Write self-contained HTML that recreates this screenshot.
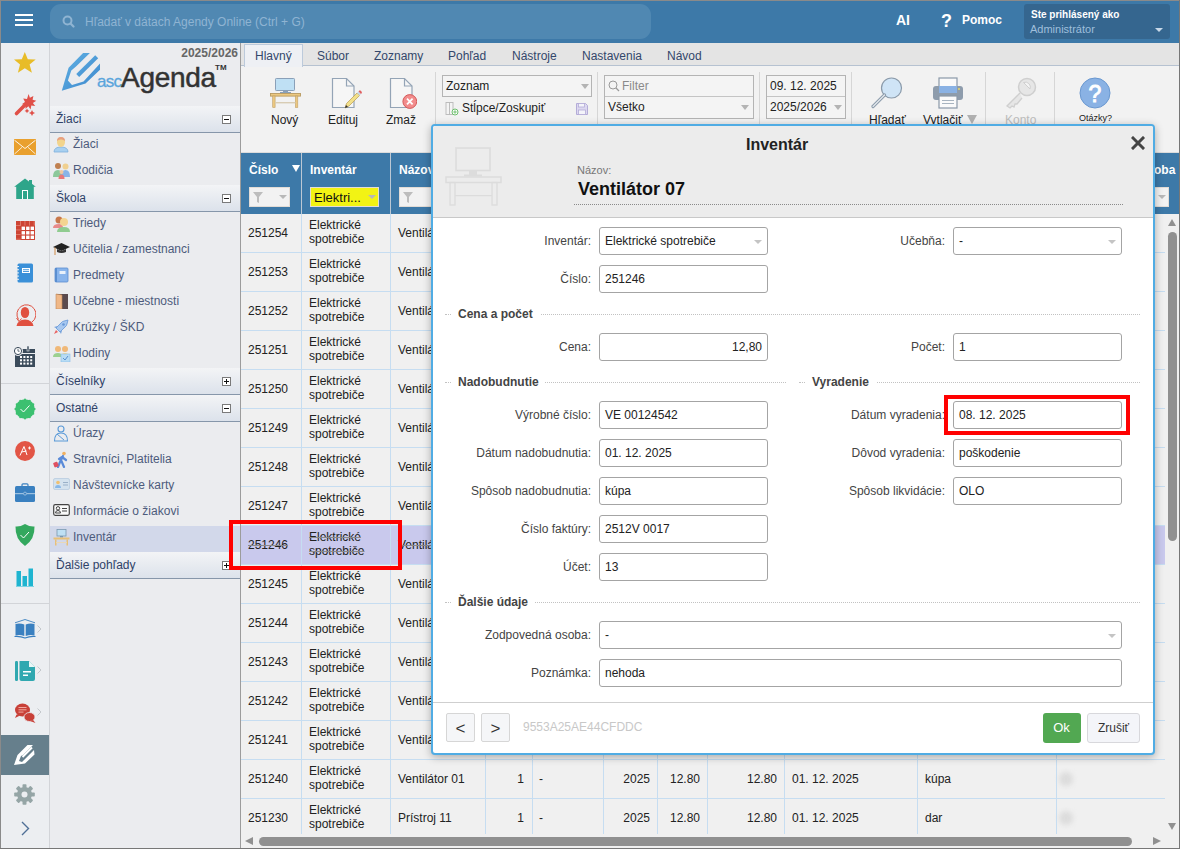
<!DOCTYPE html>
<html><head><meta charset="utf-8">
<style>
*{box-sizing:border-box;margin:0;padding:0}
html,body{width:1180px;height:849px;overflow:hidden;background:#ececec;font-family:"Liberation Sans",sans-serif;font-size:12px;color:#222}
.a{position:absolute}
.t12{position:absolute;font-size:12px;line-height:12px;white-space:nowrap}
#hdr{left:1px;top:1px;width:1178px;height:42px;background:#3d79a8}
#iconbar{left:1px;top:43px;width:48px;height:805px;background:#eceef1}
#nav{left:50px;top:43px;width:190px;height:805px;background:#ebecef}
.sec{position:absolute;left:50px;width:190px;height:27px;background:linear-gradient(#f3f4f6,#dce2eb);border-bottom:1px solid #8696aa}
.sec .tx{position:absolute;left:6px;top:7px;font-size:12px;line-height:12px;color:#2f4268}
.sec .box{position:absolute;left:172px;top:9px;width:9px;height:9px;border:1px solid #7a7a7a;background:#fff}
.sec .box:before{content:"";position:absolute;left:1px;top:3px;width:5px;height:1px;background:#111}
.sec .box.plus:after{content:"";position:absolute;left:3px;top:1px;width:1px;height:5px;background:#111}
.item{position:absolute;left:50px;width:190px;height:26px}
.item .tx{position:absolute;left:23px;top:5px;font-size:12px;line-height:12px;color:#4d5b7c;white-space:nowrap}
.item svg{position:absolute;left:3px;top:3px}
#main{left:241px;top:43px;width:938px;height:805px;background:#f2f2f2}
.tab{position:absolute;top:50px;color:#33476b;font-size:12px;line-height:12px}
.tb{position:absolute;font-size:12px;line-height:12px;color:#222;white-space:nowrap}
.sep{position:absolute;top:72px;width:1px;height:78px;background:#d6d6d6}
.arr{position:absolute;width:0;height:0;border-left:4px solid transparent;border-right:4px solid transparent;border-top:5px solid #b4b4b4}
.gh{position:absolute;top:162px;color:#fff;font-weight:bold;font-size:12px;line-height:12px;white-space:nowrap}
.fbox{position:absolute;top:187px;height:20px;background:#f2f2f2;border:1px solid #c8d2dc}
.row{position:absolute;left:241px;width:924px;height:39px;border-bottom:1px solid #c6ddf1;background:#f0f0f0}
.c{position:absolute;top:14px;font-size:12px;line-height:12px;color:#222;white-space:nowrap}
.c2{position:absolute;top:6px;line-height:13.5px;font-size:12px;color:#222;white-space:nowrap}
.r{text-align:right}
.vl{position:absolute;top:214px;width:1px;height:620px;background:#c6ddf1}
.vh{position:absolute;top:153px;width:1px;height:61px;background:#2d6697}
</style></head><body>
<!-- frame borders -->
<div class="a" style="left:0;top:0;width:1180px;height:1px;background:#8a8a8a"></div>
<div class="a" style="left:0;top:0;width:1px;height:849px;background:#8a8a8a"></div>
<div class="a" style="left:1179px;top:0;width:1px;height:849px;background:#777"></div>
<div class="a" style="left:0;top:848px;width:1180px;height:1px;background:#777"></div>

<!-- HEADER -->
<div id="hdr" class="a">
  <div class="a" style="left:14px;top:13px;width:18px;height:2px;background:#fff;box-shadow:0 5px 0 #fff,0 10px 0 #fff"></div>
  <div class="a" style="left:49px;top:3px;width:601px;height:35px;border-radius:11px;background:#5088b2">
    <svg class="a" style="left:12px;top:11px" width="13" height="13" viewBox="0 0 13 13"><circle cx="5.5" cy="5.5" r="4" fill="none" stroke="#8fb4d2" stroke-width="2"/><line x1="8.5" y1="8.5" x2="11.5" y2="11.5" stroke="#8fb4d2" stroke-width="2.2" stroke-linecap="round"/></svg>
    <div class="t12" style="left:35px;top:12px;color:#8fb4d2">Hľadať v dátach Agendy Online (Ctrl + G)</div>
  </div>
  <div class="a" style="left:895px;top:12px;color:#fff;font-weight:bold;font-size:14px;line-height:14px">AI</div>
  <div class="a" style="left:940px;top:11px;color:#fff;font-weight:bold;font-size:18px;line-height:18px">?</div>
  <div class="a" style="left:961px;top:13px;color:#fff;font-weight:bold;font-size:12px;line-height:12px">Pomoc</div>
  <div class="a" style="left:1023px;top:3px;width:146px;height:35px;background:#35668f;border-radius:3px">
    <div class="a" style="left:7px;top:6px;color:#fff;font-weight:bold;font-size:10px;line-height:10px">Ste prihlásený ako</div>
    <div class="a" style="left:6px;top:20px;color:#9fbfdc;font-size:11px;line-height:11px">Administrátor</div>
    <div class="arr" style="left:131px;top:24px;border-top-color:#c8d8e8;border-left-width:4px;border-right-width:4px;border-top-width:4px"></div>
  </div>
</div>

<!-- ICON BAR -->
<div id="iconbar" class="a"></div>
<div class="a" style="left:49px;top:43px;width:1px;height:805px;background:#d2d4d8"></div>

<!-- NAV -->
<div id="nav" class="a"></div>
<div class="a" style="left:240px;top:43px;width:1px;height:805px;background:#9c9c9c"></div>

<!-- MAIN -->
<div id="main" class="a"></div>
<!-- tabs -->
<div class="a" style="left:241px;top:43px;width:938px;height:23px;background:#e4e4e4"></div>
<div class="a" style="left:241px;top:65px;width:938px;height:1px;background:#b6c2d1"></div>
<div class="a" style="left:244px;top:44px;width:59px;height:23px;background:#eef0f4;border:1px solid #bccadb;border-bottom:none"></div>
<div class="tab" style="left:255px">Hlavný</div>
<div class="tab" style="left:317px">Súbor</div>
<div class="tab" style="left:374px">Zoznamy</div>
<div class="tab" style="left:448px">Pohľad</div>
<div class="tab" style="left:512px">Nástroje</div>
<div class="tab" style="left:582px">Nastavenia</div>
<div class="tab" style="left:667px">Návod</div>

<div class="a" style="left:130px;top:47px;width:108px;text-align:right;color:#666;font-weight:bold;font-size:12px;line-height:12px">2025/2026</div>
<svg class="a" style="left:55px;top:48px" width="50" height="48" viewBox="0 0 50 48">
<defs><linearGradient id="lg" x1="0" y1="0" x2="1" y2="1"><stop offset="0" stop-color="#62b2e4"/><stop offset="1" stop-color="#3b86cc"/></linearGradient></defs>
<path d="M6.8 42.7 L13.6 19.7 L28.1 5.1 L34.9 5.1 L21 18.6 L16.3 22.4 L12.9 32.5 L17 37 L28.5 33.6 L45 15.6 L45 21.7 L30.5 35.6 Z" fill="url(#lg)"/>
<path d="M41.7 8.8 L22.7 27.5" stroke="url(#lg)" stroke-width="4.2" stroke-linecap="butt"/>
</svg>
<div class="a" style="left:97px;top:73px;color:#5aa5dc;font-size:17px;line-height:17px;letter-spacing:-0.7px;-webkit-text-stroke:0.3px #5aa5dc">asc</div>
<div class="a" style="left:121px;top:64px;color:#333;font-size:28px;line-height:28px;letter-spacing:-0.3px;-webkit-text-stroke:0.5px #333">Agenda</div>
<div class="a" style="left:215px;top:64px;color:#333;font-size:8px;line-height:8px;font-weight:bold">TM</div>
<div class="sec" style="top:106px"><div class="tx">Žiaci</div><div class="box"></div></div>
<div class="item" style="top:133px;"><svg width="16" height="17" viewBox="0 0 16 17"><path d="M1 16 Q1 11 8 11 Q15 11 15 16 Z" fill="#a8d0f0" stroke="#7fb0dc" stroke-width="0.8"/><ellipse cx="8" cy="6" rx="4" ry="5" fill="#f2d48c"/><path d="M4 5 Q4 1 8 1 Q12 1 12 5 Q10 3 8 3.5 Q6 3 4 5Z" fill="#e8a080"/></svg><div class="tx">Žiaci</div></div>
<div class="item" style="top:159px;"><svg width="18" height="17" viewBox="0 0 18 17"><circle cx="5" cy="4" r="3" fill="#c08050"/><path d="M0 15 Q0 8 5 8 Q9 8 9 15Z" fill="#8cc89a"/><circle cx="12.5" cy="4.5" r="3" fill="#f0d090"/><path d="M8 15 Q8 8 12.5 8 Q17 8 17 15Z" fill="#88b4e8"/><circle cx="8.5" cy="10" r="2" fill="#f0c8a0"/><path d="M5.5 17 Q5.5 12.5 8.5 12.5 Q11.5 12.5 11.5 17Z" fill="#e87878"/></svg><div class="tx">Rodičia</div></div>
<div class="sec" style="top:185px"><div class="tx">Škola</div><div class="box"></div></div>
<div class="item" style="top:212px;"><svg width="18" height="17" viewBox="0 0 18 17"><circle cx="6" cy="5" r="3.5" fill="#c8784c"/><path d="M0 13 Q0 9 6 9 Q10 9 10 13Z" fill="#e88a8a"/><circle cx="11" cy="7" r="4" fill="#f4d490"/><path d="M4 17 Q4 12 11 12 Q17 12 17 17Z" fill="#90cc90"/></svg><div class="tx">Triedy</div></div>
<div class="item" style="top:238px;"><svg width="17" height="16" viewBox="0 0 17 16"><path d="M0 6 L8.5 2 L17 6 L8.5 10 Z" fill="#222"/><path d="M4 8 L4 11 Q8.5 13 13 11 L13 8 L8.5 10Z" fill="#333"/><line x1="2" y1="6.5" x2="2" y2="14" stroke="#d49a60" stroke-width="1.2"/></svg><div class="tx">Učitelia / zamestnanci</div></div>
<div class="item" style="top:264px;"><svg width="16" height="16" viewBox="0 0 16 16"><rect x="2" y="1" width="13" height="14" rx="1" fill="#88b4ec" stroke="#5a8ed0" stroke-width="0.8"/><rect x="2" y="1" width="2" height="14" fill="#5a8ed0"/><rect x="6.5" y="4" width="6" height="3" fill="#e8f0fa"/></svg><div class="tx">Predmety</div></div>
<div class="item" style="top:290px;"><svg width="16" height="16" viewBox="0 0 16 16"><rect x="3" y="1" width="12" height="15" fill="#5a4a4e"/><path d="M3 1 L9 2 L9 16 L3 16Z" fill="#f0b888" stroke="#c08858" stroke-width="0.6"/></svg><div class="tx">Učebne - miestnosti</div></div>
<div class="item" style="top:316px;"><svg width="16" height="16" viewBox="0 0 16 16"><path d="M15 1 Q9 1 5 7 L3 9 L7 13 L9 11 Q15 7 15 1Z" fill="#a8c8f0" stroke="#6898d8" stroke-width="0.8"/><path d="M5 7 L1 8 L3 9Z M9 11 L8 15 L7 13Z" fill="#6898d8"/><path d="M3 11 L1 15 L5 13Z" fill="#e86060"/><circle cx="10.5" cy="5.5" r="1.3" fill="#6898d8"/></svg><div class="tx">Krúžky / ŠKD</div></div>
<div class="item" style="top:342px;"><svg width="18" height="17" viewBox="0 0 18 17"><circle cx="5" cy="4" r="3" fill="#f0b878"/><circle cx="12" cy="4" r="3" fill="#f0b878"/><path d="M0 12 Q0 8 5 8 Q9 8 9 12Z" fill="#9cd090"/><path d="M8 12 Q8 8 12 8 Q16 8 16 12Z" fill="#f0d890"/><rect x="8" y="9" width="9" height="8" fill="#b8dcf4" stroke="#88bce8" stroke-width="0.6"/><path d="M10 13 L12 15 L15 11" stroke="#5890d0" stroke-width="1" fill="none"/></svg><div class="tx">Hodiny</div></div>
<div class="sec" style="top:368px"><div class="tx">Číselníky</div><div class="box plus"></div></div>
<div class="sec" style="top:395px"><div class="tx">Ostatné</div><div class="box"></div></div>
<div class="item" style="top:422px;"><svg width="16" height="17" viewBox="0 0 16 17"><circle cx="8" cy="4" r="3" fill="none" stroke="#5a9ad8" stroke-width="1.1"/><path d="M1.5 16 Q1.5 8 8 8 Q14.5 8 14.5 16Z" fill="none" stroke="#5a9ad8" stroke-width="1.1"/><path d="M4 9 L11 15" stroke="#5a9ad8" stroke-width="1"/></svg><div class="tx">Úrazy</div></div>
<div class="item" style="top:448px;"><svg width="16" height="17" viewBox="0 0 16 17"><circle cx="11" cy="2.5" r="1.8" fill="#f0b060"/><path d="M10 5 L7 11 L5 16 M8 9 L11 16 M9 6 L13 9 M9 6 L6 8" stroke="#5a8ad8" stroke-width="2.2" stroke-linecap="round" fill="none"/><rect x="0.5" y="11" width="4.5" height="5" rx="1" fill="#e05060" transform="rotate(-20 3 13)"/></svg><div class="tx">Stravníci, Platitelia</div></div>
<div class="item" style="top:474px;"><svg width="17" height="14" viewBox="0 0 17 14"><rect x="0.5" y="1.5" width="16" height="11" rx="1.5" fill="#d4e2ee" stroke="#b8cce0" stroke-width="0.8"/><circle cx="5" cy="5.5" r="1.8" fill="#f0c070"/><path d="M2 11 Q2 8 5 8 Q8 8 8 11Z" fill="#88b8e8"/><rect x="10" y="5" width="5" height="1" fill="#9ab0c8"/><rect x="10" y="7.5" width="5" height="1" fill="#9ab0c8"/></svg><div class="tx">Návštevnícke karty</div></div>
<div class="item" style="top:500px;"><svg width="17" height="14" viewBox="0 0 17 14"><rect x="0.7" y="1.7" width="15.6" height="10.6" rx="1.5" fill="#fafafa" stroke="#444" stroke-width="1.2"/><circle cx="5" cy="5.3" r="1.7" fill="none" stroke="#444" stroke-width="1"/><path d="M2.5 10 Q2.5 7.5 5 7.5 Q7.5 7.5 7.5 10Z" fill="none" stroke="#444" stroke-width="1"/><rect x="9" y="5" width="5" height="1" fill="#444"/><rect x="9" y="7.5" width="5" height="1" fill="#444"/></svg><div class="tx">Informácie o žiakovi</div></div>
<div class="item" style="top:526px;background:#d2d8ea;"><svg width="17" height="17" viewBox="0 0 17 17"><rect x="4" y="0.5" width="9" height="6.5" fill="#bfe0f4" stroke="#7a98b0" stroke-width="0.8"/><rect x="7" y="7" width="3" height="1.5" fill="#7a98b0"/><rect x="0.5" y="8.5" width="16" height="2" fill="#e8c078"/><rect x="2" y="10.5" width="1.5" height="6" fill="#e8c078"/><rect x="13.5" y="10.5" width="1.5" height="6" fill="#e8c078"/><rect x="3" y="13" width="11" height="1" fill="#e8d8b8"/></svg><div class="tx">Inventár</div></div>
<div class="sec" style="top:552px"><div class="tx">Ďalšie pohľady</div><div class="box plus"></div></div>
<div class="a" style="left:241px;top:152px;width:938px;height:1px;background:#dcdcdc"></div>
<svg class="a" style="left:269px;top:77px" width="32" height="32" viewBox="0 0 32 32">
<rect x="6.5" y="1.5" width="19" height="12" rx="0.8" fill="#bfe0f4" stroke="#8aa0b8" stroke-width="1"/>
<rect x="14" y="13.5" width="5" height="2" fill="#8aa0b8"/><rect x="11" y="15" width="11" height="1.3" fill="#8aa0b8"/>
<rect x="1.5" y="16.5" width="30" height="2.6" fill="#ecc880" stroke="#b89a60" stroke-width="0.9"/>
<rect x="3.7" y="19" width="2.4" height="11.5" fill="#ecc880" stroke="#c0a068" stroke-width="0.6"/>
<rect x="26.4" y="19" width="2.4" height="11.5" fill="#ecc880" stroke="#c0a068" stroke-width="0.6"/>
<rect x="6" y="25" width="20.5" height="1.4" fill="#d8ccb4"/>
</svg>
<div class="tb" style="left:271px;top:114px">Nový</div>
<svg class="a" style="left:331px;top:77px" width="32" height="33" viewBox="0 0 32 33">
<path d="M1.5 1.5 L15.5 1.5 L23 9 L23 30.5 L1.5 30.5 Z" fill="#f6f6f6" stroke="#94a4b6" stroke-width="1.2"/>
<path d="M15.5 1.5 L15.5 9 L23 9" fill="none" stroke="#94a4b6" stroke-width="1.2"/>
<path d="M14 31 L15.5 26.5 L26 16 L28.5 18.5 L18 29 Z" fill="#f2e08a" stroke="#b89a50" stroke-width="0.7"/>
<path d="M26 16 L27.5 14.5 L30 17 L28.5 18.5Z" fill="#c8d8e8"/>
<path d="M27.5 14.5 L28.8 13.2 Q30.5 13.5 31 15.8 L30 17Z" fill="#e06060"/>
<path d="M14 31 L15 28 L17 30Z" fill="#333"/>
</svg>
<div class="tb" style="left:328px;top:114px">Edituj</div>
<svg class="a" style="left:389px;top:77px" width="28" height="33" viewBox="0 0 28 33">
<path d="M1.5 1.5 L15.5 1.5 L23 9 L23 30.5 L1.5 30.5 Z" fill="#f6f6f6" stroke="#94a4b6" stroke-width="1.2"/>
<path d="M15.5 1.5 L15.5 9 L23 9" fill="none" stroke="#94a4b6" stroke-width="1.2"/>
<circle cx="20.8" cy="24.5" r="6.9" fill="#f28c8c" stroke="#d45a5a" stroke-width="1"/>
<path d="M18 21.7 L23.6 27.3 M23.6 21.7 L18 27.3" stroke="#fff" stroke-width="1.8"/>
</svg>
<div class="tb" style="left:386px;top:114px">Zmaž</div>
<div class="sep" style="left:435px"></div>
<div class="a" style="left:442px;top:75px;width:150px;height:22px;border:1px solid #b4b4b4;background:#f4f4f4"></div>
<div class="tb" style="left:446px;top:80px">Zoznam</div>
<div class="arr" style="left:581px;top:84px"></div>
<svg class="a" style="left:445px;top:102px" width="14" height="14" viewBox="0 0 14 14">
<rect x="1" y="0.5" width="7" height="12" fill="#f4f4f4" stroke="#b8b8b8" stroke-width="0.9"/><line x1="4.5" y1="0.5" x2="4.5" y2="12.5" stroke="#b8b8b8" stroke-width="0.9"/>
<circle cx="10" cy="10" r="3" fill="#fff" stroke="#6cbf6c" stroke-width="1"/><path d="M8.3 10 H11.7 M10 8.3 V11.7" stroke="#6cbf6c" stroke-width="1"/>
</svg>
<div class="tb" style="left:462px;top:102px">Stĺpce/Zoskupiť</div>
<svg class="a" style="left:576px;top:103px" width="12" height="12" viewBox="0 0 12 12">
<path d="M0.5 0.5 H9.5 L11.5 2.5 V11.5 H0.5Z" fill="#dcd8f0" stroke="#b4acd8" stroke-width="1"/>
<rect x="2.5" y="0.5" width="6" height="3.5" fill="#f4f4fa" stroke="#b4acd8" stroke-width="0.8"/>
<rect x="2.5" y="7" width="7" height="4.5" fill="#f4f4fa" stroke="#b4acd8" stroke-width="0.8"/>
</svg>
<div class="sep" style="left:597px"></div>
<div class="a" style="left:604px;top:75px;width:150px;height:44px;border:1px solid #b4b4b4;background:#f4f4f4"></div>
<div class="a" style="left:605px;top:96px;width:148px;height:1px;background:#c4c4c4"></div>
<svg class="a" style="left:608px;top:80px" width="12" height="12" viewBox="0 0 12 12"><circle cx="5" cy="5" r="4" fill="none" stroke="#999" stroke-width="1"/><line x1="8" y1="8" x2="11" y2="11" stroke="#999" stroke-width="1.2"/></svg>
<div class="tb" style="left:622px;top:80px;color:#8a8a8a">Filter</div>
<div class="tb" style="left:608px;top:101px">Všetko</div>
<div class="arr" style="left:741px;top:105px"></div>
<div class="sep" style="left:759px"></div>
<div class="a" style="left:766px;top:75px;width:80px;height:44px;border:1px solid #b4b4b4;background:#f4f4f4"></div>
<div class="a" style="left:767px;top:96px;width:78px;height:1px;background:#c4c4c4"></div>
<div class="tb" style="left:770px;top:80px">09. 12. 2025</div>
<div class="tb" style="left:770px;top:101px">2025/2026</div>
<div class="arr" style="left:834px;top:105px"></div>
<div class="sep" style="left:851px"></div>
<svg class="a" style="left:870px;top:77px" width="34" height="32" viewBox="0 0 34 32">
<circle cx="21.5" cy="11" r="10" fill="#cfe4f6" stroke="#8a9aaa" stroke-width="1.2"/>
<path d="M14.5 18 L3 29.5" stroke="#8a9aaa" stroke-width="3.2" stroke-linecap="round"/>
<path d="M14.5 18 L3 29.5" stroke="#e4e8ec" stroke-width="1.2" stroke-linecap="round"/>
</svg>
<div class="tb" style="left:869px;top:114px">Hľadať</div>
<svg class="a" style="left:932px;top:77px" width="32" height="32" viewBox="0 0 32 32">
<rect x="7" y="1" width="18" height="9" fill="#fafafa" stroke="#8a98a8" stroke-width="1.2"/>
<rect x="1" y="9" width="30" height="14" rx="3" fill="#8e9cac"/>
<rect x="7" y="9" width="18" height="7" fill="#8ab2e4"/>
<rect x="7" y="19" width="18" height="12" fill="#fafafa" stroke="#8a98a8" stroke-width="1.2"/>
<line x1="10" y1="23.5" x2="22" y2="23.5" stroke="#a8b4c0" stroke-width="1"/><line x1="10" y1="26.5" x2="22" y2="26.5" stroke="#a8b4c0" stroke-width="1"/>
<circle cx="27" cy="12" r="0.9" fill="#f0e060"/>
</svg>
<div class="tb" style="left:923px;top:114px">Vytlačiť</div>
<div class="a" style="left:967px;top:115px;width:0;height:0;border-left:5px solid transparent;border-right:5px solid transparent;border-top:9px solid #b0b0b0"></div>
<div class="sep" style="left:985px"></div>
<svg class="a" style="left:1005px;top:77px" width="32" height="32" viewBox="0 0 32 32">
<circle cx="22" cy="10" r="8.5" fill="#e6e6e6" stroke="#cfcfcf" stroke-width="1.5"/>
<path d="M18.5 5.5 L25 12 A5 5 0 0 0 18.5 5.5Z" fill="#f4f4f4" stroke="#cfcfcf" stroke-width="1"/>
<path d="M15 16 L2 29 L5 31 L7 29 L9 30 L10 27 L12 27 L17 21" fill="#e6e6e6" stroke="#cfcfcf" stroke-width="1.3"/>
</svg>
<div class="tb" style="left:1005px;top:114px;color:#bdbdbd">Konto</div>
<div class="sep" style="left:1054px"></div>
<svg class="a" style="left:1079px;top:77px" width="32" height="32" viewBox="0 0 32 32">
<circle cx="16" cy="16" r="15" fill="#8ab2e4" stroke="#6a98d0" stroke-width="1"/>
<text x="16" y="24.5" text-anchor="middle" font-family="Liberation Sans" font-size="23" fill="#fff" stroke="#fff" stroke-width="0.9">?</text>
</svg>
<div class="a" style="left:1079px;top:114px;font-size:9px;line-height:9px;color:#222">Otázky?</div>
<div class="a" style="left:241px;top:153px;width:938px;height:61px;background:#3d79a8"></div>
<div class="a" style="left:301px;top:153px;width:1px;height:61px;background:#bcc8d4"></div>
<div class="a" style="left:390px;top:153px;width:1px;height:61px;background:#bcc8d4"></div>
<div class="a" style="left:485px;top:153px;width:1px;height:61px;background:#bcc8d4"></div>
<div class="a" style="left:532px;top:153px;width:1px;height:61px;background:#bcc8d4"></div>
<div class="a" style="left:603px;top:153px;width:1px;height:61px;background:#bcc8d4"></div>
<div class="a" style="left:657px;top:153px;width:1px;height:61px;background:#bcc8d4"></div>
<div class="a" style="left:707px;top:153px;width:1px;height:61px;background:#bcc8d4"></div>
<div class="a" style="left:784px;top:153px;width:1px;height:61px;background:#bcc8d4"></div>
<div class="a" style="left:917px;top:153px;width:1px;height:61px;background:#bcc8d4"></div>
<div class="a" style="left:1056px;top:153px;width:1px;height:61px;background:#bcc8d4"></div>
<div class="a" style="left:1146px;top:153px;width:1px;height:61px;background:#bcc8d4"></div>
<div class="gh" style="left:249px;top:164px">Číslo</div>
<div class="a" style="left:292px;top:165px;width:0;height:0;border-left:4px solid transparent;border-right:4px solid transparent;border-top:7px solid #fff"></div>
<div class="gh" style="left:310px;top:164px">Inventár</div>
<div class="gh" style="left:399px;top:164px">Názov</div>
<div class="gh" style="left:1104px;top:164px">Zodp. osoba</div>
<div class="a" style="left:249px;top:187px;width:41px;height:20px;background:#f2f2f2;border:1px solid #e2dcd6"><svg class="a" style="left:3px;top:4px" width="10" height="11" viewBox="0 0 10 11"><path d="M0 0 H10 L6 5 V11 L4 10 V5Z" fill="#bdbdbd"/></svg><div class="arr" style="left:29px;top:7px;border-top-color:#b8b8b8;border-top-width:4px"></div></div>
<div class="a" style="left:310px;top:187px;width:69px;height:20px;background:#f2f314;border:1px solid #e2dcd6"><div class="a" style="left:3px;top:3px;font-size:13px;line-height:13px;color:#111">Elektri...</div><div class="arr" style="left:57px;top:7px;border-top-color:#b8b8b8;border-top-width:4px"></div></div>
<div class="a" style="left:399px;top:187px;width:78px;height:20px;background:#f2f2f2;border:1px solid #e2dcd6"><svg class="a" style="left:3px;top:4px" width="10" height="11" viewBox="0 0 10 11"><path d="M0 0 H10 L6 5 V11 L4 10 V5Z" fill="#bdbdbd"/></svg><div class="arr" style="left:66px;top:7px;border-top-color:#b8b8b8;border-top-width:4px"></div></div>
<div class="a" style="left:1090px;top:187px;width:79px;height:20px;background:#f2f2f2;border:1px solid #e2dcd6"><svg class="a" style="left:3px;top:4px" width="10" height="11" viewBox="0 0 10 11"><path d="M0 0 H10 L6 5 V11 L4 10 V5Z" fill="#bdbdbd"/></svg><div class="arr" style="left:67px;top:7px;border-top-color:#b8b8b8;border-top-width:4px"></div></div>
<div class="a" style="left:241px;top:214px;width:924px;height:620px;overflow:hidden">
<div class="a" style="left:0;top:0px;width:924px;height:39px;background:#f0f0f0;border-bottom:1px solid #c6ddf1"><div class="c" style="left:7px;top:13px">251254</div><div class="c2" style="left:68px;top:5px">Elektrické<br>spotrebiče</div><div class="c" style="left:157px;top:13px">Ventilátor 15</div><div class="c r" style="left:245px;width:38px;top:13px">1</div><div class="c" style="left:298px;top:13px">-</div><div class="c r" style="left:362px;width:47px;top:13px">2025</div><div class="c r" style="left:416px;width:43px;top:13px">12.80</div><div class="c r" style="left:466px;width:70px;top:13px">12.80</div><div class="c" style="left:551px;top:13px">01. 12. 2025</div><div class="c" style="left:684px;top:13px">kúpa</div><div class="a" style="left:818px;top:12px;width:14px;height:14px;border-radius:7px;background:#dcdcdc;filter:blur(2.5px)"></div></div>
<div class="a" style="left:0;top:39px;width:924px;height:39px;background:#f0f0f0;border-bottom:1px solid #c6ddf1"><div class="c" style="left:7px;top:13px">251253</div><div class="c2" style="left:68px;top:5px">Elektrické<br>spotrebiče</div><div class="c" style="left:157px;top:13px">Ventilátor 14</div><div class="c r" style="left:245px;width:38px;top:13px">1</div><div class="c" style="left:298px;top:13px">-</div><div class="c r" style="left:362px;width:47px;top:13px">2025</div><div class="c r" style="left:416px;width:43px;top:13px">12.80</div><div class="c r" style="left:466px;width:70px;top:13px">12.80</div><div class="c" style="left:551px;top:13px">01. 12. 2025</div><div class="c" style="left:684px;top:13px">kúpa</div><div class="a" style="left:818px;top:12px;width:14px;height:14px;border-radius:7px;background:#dcdcdc;filter:blur(2.5px)"></div></div>
<div class="a" style="left:0;top:78px;width:924px;height:39px;background:#f0f0f0;border-bottom:1px solid #c6ddf1"><div class="c" style="left:7px;top:13px">251252</div><div class="c2" style="left:68px;top:5px">Elektrické<br>spotrebiče</div><div class="c" style="left:157px;top:13px">Ventilátor 13</div><div class="c r" style="left:245px;width:38px;top:13px">1</div><div class="c" style="left:298px;top:13px">-</div><div class="c r" style="left:362px;width:47px;top:13px">2025</div><div class="c r" style="left:416px;width:43px;top:13px">12.80</div><div class="c r" style="left:466px;width:70px;top:13px">12.80</div><div class="c" style="left:551px;top:13px">01. 12. 2025</div><div class="c" style="left:684px;top:13px">kúpa</div><div class="a" style="left:818px;top:12px;width:14px;height:14px;border-radius:7px;background:#dcdcdc;filter:blur(2.5px)"></div></div>
<div class="a" style="left:0;top:117px;width:924px;height:39px;background:#f0f0f0;border-bottom:1px solid #c6ddf1"><div class="c" style="left:7px;top:13px">251251</div><div class="c2" style="left:68px;top:5px">Elektrické<br>spotrebiče</div><div class="c" style="left:157px;top:13px">Ventilátor 12</div><div class="c r" style="left:245px;width:38px;top:13px">1</div><div class="c" style="left:298px;top:13px">-</div><div class="c r" style="left:362px;width:47px;top:13px">2025</div><div class="c r" style="left:416px;width:43px;top:13px">12.80</div><div class="c r" style="left:466px;width:70px;top:13px">12.80</div><div class="c" style="left:551px;top:13px">01. 12. 2025</div><div class="c" style="left:684px;top:13px">kúpa</div><div class="a" style="left:818px;top:12px;width:14px;height:14px;border-radius:7px;background:#dcdcdc;filter:blur(2.5px)"></div></div>
<div class="a" style="left:0;top:156px;width:924px;height:39px;background:#f0f0f0;border-bottom:1px solid #c6ddf1"><div class="c" style="left:7px;top:13px">251250</div><div class="c2" style="left:68px;top:5px">Elektrické<br>spotrebiče</div><div class="c" style="left:157px;top:13px">Ventilátor 11</div><div class="c r" style="left:245px;width:38px;top:13px">1</div><div class="c" style="left:298px;top:13px">-</div><div class="c r" style="left:362px;width:47px;top:13px">2025</div><div class="c r" style="left:416px;width:43px;top:13px">12.80</div><div class="c r" style="left:466px;width:70px;top:13px">12.80</div><div class="c" style="left:551px;top:13px">01. 12. 2025</div><div class="c" style="left:684px;top:13px">kúpa</div><div class="a" style="left:818px;top:12px;width:14px;height:14px;border-radius:7px;background:#dcdcdc;filter:blur(2.5px)"></div></div>
<div class="a" style="left:0;top:195px;width:924px;height:39px;background:#f0f0f0;border-bottom:1px solid #c6ddf1"><div class="c" style="left:7px;top:13px">251249</div><div class="c2" style="left:68px;top:5px">Elektrické<br>spotrebiče</div><div class="c" style="left:157px;top:13px">Ventilátor 10</div><div class="c r" style="left:245px;width:38px;top:13px">1</div><div class="c" style="left:298px;top:13px">-</div><div class="c r" style="left:362px;width:47px;top:13px">2025</div><div class="c r" style="left:416px;width:43px;top:13px">12.80</div><div class="c r" style="left:466px;width:70px;top:13px">12.80</div><div class="c" style="left:551px;top:13px">01. 12. 2025</div><div class="c" style="left:684px;top:13px">kúpa</div><div class="a" style="left:818px;top:12px;width:14px;height:14px;border-radius:7px;background:#dcdcdc;filter:blur(2.5px)"></div></div>
<div class="a" style="left:0;top:234px;width:924px;height:39px;background:#f0f0f0;border-bottom:1px solid #c6ddf1"><div class="c" style="left:7px;top:13px">251248</div><div class="c2" style="left:68px;top:5px">Elektrické<br>spotrebiče</div><div class="c" style="left:157px;top:13px">Ventilátor 09</div><div class="c r" style="left:245px;width:38px;top:13px">1</div><div class="c" style="left:298px;top:13px">-</div><div class="c r" style="left:362px;width:47px;top:13px">2025</div><div class="c r" style="left:416px;width:43px;top:13px">12.80</div><div class="c r" style="left:466px;width:70px;top:13px">12.80</div><div class="c" style="left:551px;top:13px">01. 12. 2025</div><div class="c" style="left:684px;top:13px">kúpa</div><div class="a" style="left:818px;top:12px;width:14px;height:14px;border-radius:7px;background:#dcdcdc;filter:blur(2.5px)"></div></div>
<div class="a" style="left:0;top:273px;width:924px;height:39px;background:#f0f0f0;border-bottom:1px solid #c6ddf1"><div class="c" style="left:7px;top:13px">251247</div><div class="c2" style="left:68px;top:5px">Elektrické<br>spotrebiče</div><div class="c" style="left:157px;top:13px">Ventilátor 08</div><div class="c r" style="left:245px;width:38px;top:13px">1</div><div class="c" style="left:298px;top:13px">-</div><div class="c r" style="left:362px;width:47px;top:13px">2025</div><div class="c r" style="left:416px;width:43px;top:13px">12.80</div><div class="c r" style="left:466px;width:70px;top:13px">12.80</div><div class="c" style="left:551px;top:13px">01. 12. 2025</div><div class="c" style="left:684px;top:13px">kúpa</div><div class="a" style="left:818px;top:12px;width:14px;height:14px;border-radius:7px;background:#dcdcdc;filter:blur(2.5px)"></div></div>
<div class="a" style="left:0;top:312px;width:924px;height:39px;background:#c9c9ed;border-bottom:1px solid #c6ddf1"><div class="c" style="left:7px;top:13px;text-decoration:line-through;text-decoration-color:#8a8a8a">251246</div><div class="c2" style="left:68px;top:5px;text-decoration:line-through;text-decoration-color:#8a8a8a">Elektrické<br>spotrebiče</div><div class="c" style="left:157px;top:13px;text-decoration:line-through;text-decoration-color:#8a8a8a">Ventilátor 07</div><div class="c r" style="left:245px;width:38px;top:13px;text-decoration:line-through;text-decoration-color:#8a8a8a">1</div><div class="c" style="left:298px;top:13px;text-decoration:line-through;text-decoration-color:#8a8a8a">-</div><div class="c r" style="left:362px;width:47px;top:13px;text-decoration:line-through;text-decoration-color:#8a8a8a">2025</div><div class="c r" style="left:416px;width:43px;top:13px;text-decoration:line-through;text-decoration-color:#8a8a8a">12.80</div><div class="c r" style="left:466px;width:70px;top:13px;text-decoration:line-through;text-decoration-color:#8a8a8a">12.80</div><div class="c" style="left:551px;top:13px;text-decoration:line-through;text-decoration-color:#8a8a8a">01. 12. 2025</div><div class="c" style="left:684px;top:13px;text-decoration:line-through;text-decoration-color:#8a8a8a">kúpa</div><div class="a" style="left:818px;top:12px;width:14px;height:14px;border-radius:7px;background:#dcdcdc;filter:blur(2.5px)"></div></div>
<div class="a" style="left:0;top:351px;width:924px;height:39px;background:#f0f0f0;border-bottom:1px solid #c6ddf1"><div class="c" style="left:7px;top:13px">251245</div><div class="c2" style="left:68px;top:5px">Elektrické<br>spotrebiče</div><div class="c" style="left:157px;top:13px">Ventilátor 06</div><div class="c r" style="left:245px;width:38px;top:13px">1</div><div class="c" style="left:298px;top:13px">-</div><div class="c r" style="left:362px;width:47px;top:13px">2025</div><div class="c r" style="left:416px;width:43px;top:13px">12.80</div><div class="c r" style="left:466px;width:70px;top:13px">12.80</div><div class="c" style="left:551px;top:13px">01. 12. 2025</div><div class="c" style="left:684px;top:13px">kúpa</div><div class="a" style="left:818px;top:12px;width:14px;height:14px;border-radius:7px;background:#dcdcdc;filter:blur(2.5px)"></div></div>
<div class="a" style="left:0;top:390px;width:924px;height:39px;background:#f0f0f0;border-bottom:1px solid #c6ddf1"><div class="c" style="left:7px;top:13px">251244</div><div class="c2" style="left:68px;top:5px">Elektrické<br>spotrebiče</div><div class="c" style="left:157px;top:13px">Ventilátor 05</div><div class="c r" style="left:245px;width:38px;top:13px">1</div><div class="c" style="left:298px;top:13px">-</div><div class="c r" style="left:362px;width:47px;top:13px">2025</div><div class="c r" style="left:416px;width:43px;top:13px">12.80</div><div class="c r" style="left:466px;width:70px;top:13px">12.80</div><div class="c" style="left:551px;top:13px">01. 12. 2025</div><div class="c" style="left:684px;top:13px">kúpa</div><div class="a" style="left:818px;top:12px;width:14px;height:14px;border-radius:7px;background:#dcdcdc;filter:blur(2.5px)"></div></div>
<div class="a" style="left:0;top:429px;width:924px;height:39px;background:#f0f0f0;border-bottom:1px solid #c6ddf1"><div class="c" style="left:7px;top:13px">251243</div><div class="c2" style="left:68px;top:5px">Elektrické<br>spotrebiče</div><div class="c" style="left:157px;top:13px">Ventilátor 04</div><div class="c r" style="left:245px;width:38px;top:13px">1</div><div class="c" style="left:298px;top:13px">-</div><div class="c r" style="left:362px;width:47px;top:13px">2025</div><div class="c r" style="left:416px;width:43px;top:13px">12.80</div><div class="c r" style="left:466px;width:70px;top:13px">12.80</div><div class="c" style="left:551px;top:13px">01. 12. 2025</div><div class="c" style="left:684px;top:13px">kúpa</div><div class="a" style="left:818px;top:12px;width:14px;height:14px;border-radius:7px;background:#dcdcdc;filter:blur(2.5px)"></div></div>
<div class="a" style="left:0;top:468px;width:924px;height:39px;background:#f0f0f0;border-bottom:1px solid #c6ddf1"><div class="c" style="left:7px;top:13px">251242</div><div class="c2" style="left:68px;top:5px">Elektrické<br>spotrebiče</div><div class="c" style="left:157px;top:13px">Ventilátor 03</div><div class="c r" style="left:245px;width:38px;top:13px">1</div><div class="c" style="left:298px;top:13px">-</div><div class="c r" style="left:362px;width:47px;top:13px">2025</div><div class="c r" style="left:416px;width:43px;top:13px">12.80</div><div class="c r" style="left:466px;width:70px;top:13px">12.80</div><div class="c" style="left:551px;top:13px">01. 12. 2025</div><div class="c" style="left:684px;top:13px">kúpa</div><div class="a" style="left:818px;top:12px;width:14px;height:14px;border-radius:7px;background:#dcdcdc;filter:blur(2.5px)"></div></div>
<div class="a" style="left:0;top:507px;width:924px;height:39px;background:#f0f0f0;border-bottom:1px solid #c6ddf1"><div class="c" style="left:7px;top:13px">251241</div><div class="c2" style="left:68px;top:5px">Elektrické<br>spotrebiče</div><div class="c" style="left:157px;top:13px">Ventilátor 02</div><div class="c r" style="left:245px;width:38px;top:13px">1</div><div class="c" style="left:298px;top:13px">-</div><div class="c r" style="left:362px;width:47px;top:13px">2025</div><div class="c r" style="left:416px;width:43px;top:13px">12.80</div><div class="c r" style="left:466px;width:70px;top:13px">12.80</div><div class="c" style="left:551px;top:13px">01. 12. 2025</div><div class="c" style="left:684px;top:13px">kúpa</div><div class="a" style="left:818px;top:12px;width:14px;height:14px;border-radius:7px;background:#dcdcdc;filter:blur(2.5px)"></div></div>
<div class="a" style="left:0;top:546px;width:924px;height:39px;background:#f0f0f0;border-bottom:1px solid #c6ddf1"><div class="c" style="left:7px;top:13px">251240</div><div class="c2" style="left:68px;top:5px">Elektrické<br>spotrebiče</div><div class="c" style="left:157px;top:13px">Ventilátor 01</div><div class="c r" style="left:245px;width:38px;top:13px">1</div><div class="c" style="left:298px;top:13px">-</div><div class="c r" style="left:362px;width:47px;top:13px">2025</div><div class="c r" style="left:416px;width:43px;top:13px">12.80</div><div class="c r" style="left:466px;width:70px;top:13px">12.80</div><div class="c" style="left:551px;top:13px">01. 12. 2025</div><div class="c" style="left:684px;top:13px">kúpa</div><div class="a" style="left:818px;top:12px;width:14px;height:14px;border-radius:7px;background:#dcdcdc;filter:blur(2.5px)"></div></div>
<div class="a" style="left:0;top:585px;width:924px;height:39px;background:#f0f0f0;border-bottom:1px solid #c6ddf1"><div class="c" style="left:7px;top:13px">251230</div><div class="c2" style="left:68px;top:5px">Elektrické<br>spotrebiče</div><div class="c" style="left:157px;top:13px">Prístroj 11</div><div class="c r" style="left:245px;width:38px;top:13px">1</div><div class="c" style="left:298px;top:13px">-</div><div class="c r" style="left:362px;width:47px;top:13px">2025</div><div class="c r" style="left:416px;width:43px;top:13px">12.80</div><div class="c r" style="left:466px;width:70px;top:13px">12.80</div><div class="c" style="left:551px;top:13px">01. 12. 2025</div><div class="c" style="left:684px;top:13px">dar</div><div class="a" style="left:818px;top:12px;width:14px;height:14px;border-radius:7px;background:#dcdcdc;filter:blur(2.5px)"></div></div>
<div class="a" style="left:60px;top:0;width:1px;height:620px;background:#c6ddf1"></div>
<div class="a" style="left:149px;top:0;width:1px;height:620px;background:#c6ddf1"></div>
<div class="a" style="left:244px;top:0;width:1px;height:620px;background:#c6ddf1"></div>
<div class="a" style="left:291px;top:0;width:1px;height:620px;background:#c6ddf1"></div>
<div class="a" style="left:362px;top:0;width:1px;height:620px;background:#c6ddf1"></div>
<div class="a" style="left:416px;top:0;width:1px;height:620px;background:#c6ddf1"></div>
<div class="a" style="left:466px;top:0;width:1px;height:620px;background:#c6ddf1"></div>
<div class="a" style="left:543px;top:0;width:1px;height:620px;background:#c6ddf1"></div>
<div class="a" style="left:676px;top:0;width:1px;height:620px;background:#c6ddf1"></div>
<div class="a" style="left:815px;top:0;width:1px;height:620px;background:#c6ddf1"></div>
</div>
<div class="a" style="left:241px;top:834px;width:938px;height:14px;background:#f0f0f0"></div>
<div class="a" style="left:1165px;top:214px;width:14px;height:634px;background:#f0f0f0"></div>
<div class="a" style="left:259px;top:837px;width:873px;height:9px;border-radius:4.5px;background:#909090"></div>
<div class="a" style="left:245px;top:837px;width:0;height:0;border-top:4.5px solid transparent;border-bottom:4.5px solid transparent;border-right:8px solid #909090"></div>
<div class="a" style="left:1153px;top:837px;width:0;height:0;border-top:4.5px solid transparent;border-bottom:4.5px solid transparent;border-left:8px solid #909090"></div>
<div class="a" style="left:1168px;top:232px;width:9px;height:309px;border-radius:4.5px;background:#909090"></div>
<div class="a" style="left:1168px;top:219px;width:0;height:0;border-left:4.5px solid transparent;border-right:4.5px solid transparent;border-bottom:7px solid #909090"></div>
<div class="a" style="left:1168px;top:823px;width:0;height:0;border-left:4.5px solid transparent;border-right:4.5px solid transparent;border-top:7px solid #909090"></div>
<div class="a" style="left:229px;top:520px;width:173px;height:50px;border:4px solid #ff0000"></div>
<div class="a" style="left:431px;top:124px;width:724px;height:631px;border:2px solid #50ace4;border-radius:4px;background:#fff;box-shadow:0 2px 9px rgba(0,0,0,0.3);overflow:hidden">
<div class="a" style="left:0;top:0;width:720px;height:92px;background:#ececec;border-bottom:1px solid #c8c8c8"></div>
<svg class="a" style="left:12px;top:21px" width="58" height="60" viewBox="0 0 58 60">
<rect x="11" y="1" width="34" height="22.5" fill="none" stroke="#dcdcdc" stroke-width="1.6"/>
<rect x="24" y="24" width="8" height="4.5" fill="#dcdcdc"/><rect x="19" y="27.5" width="18" height="2" fill="#dcdcdc"/>
<rect x="1" y="30" width="55" height="5.5" fill="none" stroke="#dcdcdc" stroke-width="1.5"/>
<rect x="5" y="35.5" width="5" height="22.5" fill="none" stroke="#dcdcdc" stroke-width="1.3"/>
<rect x="47" y="35.5" width="5" height="22.5" fill="none" stroke="#dcdcdc" stroke-width="1.3"/>
<rect x="10" y="48" width="37" height="1.3" fill="#dcdcdc"/>
</svg>
<div class="a" style="left:313px;top:11px;font-weight:bold;font-size:16px;line-height:16px;color:#222">Inventár</div>
<svg class="a" style="left:698px;top:10px" width="14" height="14" viewBox="0 0 14 14"><path d="M2 2 L12 12 M12 2 L2 12" stroke="#444" stroke-width="3" stroke-linecap="square"/></svg>
<div class="a" style="left:144px;top:39px;font-size:11px;line-height:11px;color:#777">Názov:</div>
<div class="a" style="left:145px;top:54px;font-weight:bold;font-size:18px;line-height:18px;color:#111">Ventilátor 07</div>
<div class="a" style="left:141px;top:78px;width:549px;height:0;border-top:1px dotted #8a8a8a"></div>
<div class="a" style="left:-142px;top:109px;width:300px;text-align:right;font-size:12px;line-height:12px;color:#444;white-space:nowrap">Inventár:</div>
<div class="a" style="left:166px;top:101px;width:169px;height:28px;border:1px solid #a4a4a4;border-radius:3px;background:#fff"><div class="a" style="left:5px;top:7px;font-size:12px;line-height:12px;color:#222;white-space:nowrap">Elektrické spotrebiče</div><div class="arr" style="left:154px;top:12px;border-top-color:#c4c4c4;border-left-width:4px;border-right-width:4px;border-top-width:4px"></div></div>
<div class="a" style="left:212px;top:109px;width:300px;text-align:right;font-size:12px;line-height:12px;color:#444;white-space:nowrap">Učebňa:</div>
<div class="a" style="left:520px;top:101px;width:169px;height:28px;border:1px solid #a4a4a4;border-radius:3px;background:#fff"><div class="a" style="left:5px;top:7px;font-size:12px;line-height:12px;color:#222;white-space:nowrap">-</div><div class="arr" style="left:154px;top:12px;border-top-color:#c4c4c4;border-left-width:4px;border-right-width:4px;border-top-width:4px"></div></div>
<div class="a" style="left:-142px;top:147px;width:300px;text-align:right;font-size:12px;line-height:12px;color:#444;white-space:nowrap">Číslo:</div>
<div class="a" style="left:166px;top:139px;width:169px;height:28px;border:1px solid #a4a4a4;border-radius:3px;background:#fff"><div class="a" style="left:5px;top:7px;font-size:12px;line-height:12px;color:#222;white-space:nowrap">251246</div></div>
<div class="a" style="left:12px;top:188px;width:6px;height:0;border-top:1px dotted #c2c2c2"></div><div class="a" style="left:25px;top:182px;font-weight:bold;font-size:12px;line-height:12px;color:#444">Cena a počet</div><div class="a" style="left:108px;top:188px;width:599px;height:0;border-top:1px dotted #c2c2c2"></div>
<div class="a" style="left:-142px;top:215px;width:300px;text-align:right;font-size:12px;line-height:12px;color:#444;white-space:nowrap">Cena:</div>
<div class="a" style="left:166px;top:207px;width:169px;height:28px;border:1px solid #a4a4a4;border-radius:3px;background:#fff"><div class="a" style="right:5px;text-align:right;top:7px;font-size:12px;line-height:12px;color:#222;white-space:nowrap">12,80</div></div>
<div class="a" style="left:212px;top:215px;width:300px;text-align:right;font-size:12px;line-height:12px;color:#444;white-space:nowrap">Počet:</div>
<div class="a" style="left:520px;top:207px;width:169px;height:28px;border:1px solid #a4a4a4;border-radius:3px;background:#fff"><div class="a" style="left:5px;top:7px;font-size:12px;line-height:12px;color:#222;white-space:nowrap">1</div></div>
<div class="a" style="left:12px;top:256px;width:6px;height:0;border-top:1px dotted #c2c2c2"></div><div class="a" style="left:25px;top:250px;font-weight:bold;font-size:12px;line-height:12px;color:#444">Nadobudnutie</div><div class="a" style="left:112px;top:256px;width:241px;height:0;border-top:1px dotted #c2c2c2"></div>
<div class="a" style="left:366px;top:256px;width:6px;height:0;border-top:1px dotted #c2c2c2"></div><div class="a" style="left:379px;top:250px;font-weight:bold;font-size:12px;line-height:12px;color:#444">Vyradenie</div><div class="a" style="left:444px;top:256px;width:263px;height:0;border-top:1px dotted #c2c2c2"></div>
<div class="a" style="left:-142px;top:283px;width:300px;text-align:right;font-size:12px;line-height:12px;color:#444;white-space:nowrap">Výrobné číslo:</div>
<div class="a" style="left:166px;top:275px;width:169px;height:28px;border:1px solid #a4a4a4;border-radius:3px;background:#fff"><div class="a" style="left:5px;top:7px;font-size:12px;line-height:12px;color:#222;white-space:nowrap">VE 00124542</div></div>
<div class="a" style="left:212px;top:283px;width:300px;text-align:right;font-size:12px;line-height:12px;color:#444;white-space:nowrap">Dátum vyradenia:</div>
<div class="a" style="left:520px;top:275px;width:169px;height:28px;border:1px solid #a4a4a4;border-radius:3px;background:#fff"><div class="a" style="left:5px;top:7px;font-size:12px;line-height:12px;color:#222;white-space:nowrap">08. 12. 2025</div></div>
<div class="a" style="left:-142px;top:321px;width:300px;text-align:right;font-size:12px;line-height:12px;color:#444;white-space:nowrap">Dátum nadobudnutia:</div>
<div class="a" style="left:166px;top:313px;width:169px;height:28px;border:1px solid #a4a4a4;border-radius:3px;background:#fff"><div class="a" style="left:5px;top:7px;font-size:12px;line-height:12px;color:#222;white-space:nowrap">01. 12. 2025</div></div>
<div class="a" style="left:212px;top:321px;width:300px;text-align:right;font-size:12px;line-height:12px;color:#444;white-space:nowrap">Dôvod vyradenia:</div>
<div class="a" style="left:520px;top:313px;width:169px;height:28px;border:1px solid #a4a4a4;border-radius:3px;background:#fff"><div class="a" style="left:5px;top:7px;font-size:12px;line-height:12px;color:#222;white-space:nowrap">poškodenie</div></div>
<div class="a" style="left:-142px;top:359px;width:300px;text-align:right;font-size:12px;line-height:12px;color:#444;white-space:nowrap">Spôsob nadobudnutia:</div>
<div class="a" style="left:166px;top:351px;width:169px;height:28px;border:1px solid #a4a4a4;border-radius:3px;background:#fff"><div class="a" style="left:5px;top:7px;font-size:12px;line-height:12px;color:#222;white-space:nowrap">kúpa</div></div>
<div class="a" style="left:212px;top:359px;width:300px;text-align:right;font-size:12px;line-height:12px;color:#444;white-space:nowrap">Spôsob likvidácie:</div>
<div class="a" style="left:520px;top:351px;width:169px;height:28px;border:1px solid #a4a4a4;border-radius:3px;background:#fff"><div class="a" style="left:5px;top:7px;font-size:12px;line-height:12px;color:#222;white-space:nowrap">OLO</div></div>
<div class="a" style="left:-142px;top:397px;width:300px;text-align:right;font-size:12px;line-height:12px;color:#444;white-space:nowrap">Číslo faktúry:</div>
<div class="a" style="left:166px;top:389px;width:169px;height:28px;border:1px solid #a4a4a4;border-radius:3px;background:#fff"><div class="a" style="left:5px;top:7px;font-size:12px;line-height:12px;color:#222;white-space:nowrap">2512V 0017</div></div>
<div class="a" style="left:-142px;top:435px;width:300px;text-align:right;font-size:12px;line-height:12px;color:#444;white-space:nowrap">Účet:</div>
<div class="a" style="left:166px;top:427px;width:169px;height:28px;border:1px solid #a4a4a4;border-radius:3px;background:#fff"><div class="a" style="left:5px;top:7px;font-size:12px;line-height:12px;color:#222;white-space:nowrap">13</div></div>
<div class="a" style="left:12px;top:476px;width:6px;height:0;border-top:1px dotted #c2c2c2"></div><div class="a" style="left:25px;top:470px;font-weight:bold;font-size:12px;line-height:12px;color:#444">Ďalšie údaje</div><div class="a" style="left:102px;top:476px;width:605px;height:0;border-top:1px dotted #c2c2c2"></div>
<div class="a" style="left:-142px;top:503px;width:300px;text-align:right;font-size:12px;line-height:12px;color:#444;white-space:nowrap">Zodpovedná osoba:</div>
<div class="a" style="left:166px;top:495px;width:523px;height:28px;border:1px solid #a4a4a4;border-radius:3px;background:#fff"><div class="a" style="left:5px;top:7px;font-size:12px;line-height:12px;color:#222;white-space:nowrap">-</div><div class="arr" style="left:508px;top:12px;border-top-color:#c4c4c4;border-left-width:4px;border-right-width:4px;border-top-width:4px"></div></div>
<div class="a" style="left:-142px;top:541px;width:300px;text-align:right;font-size:12px;line-height:12px;color:#444;white-space:nowrap">Poznámka:</div>
<div class="a" style="left:166px;top:533px;width:523px;height:28px;border:1px solid #a4a4a4;border-radius:3px;background:#fff"><div class="a" style="left:5px;top:7px;font-size:12px;line-height:12px;color:#222;white-space:nowrap">nehoda</div></div>
<div class="a" style="left:0;top:576px;width:720px;height:1px;background:#cfcfcf"></div>
<div class="a" style="left:13px;top:587px;width:29px;height:29px;background:#f5f6f8;border:1px solid #d6d6d6;border-radius:2px"><div class="a" style="left:0;top:6px;width:27px;text-align:center;font-size:17px;line-height:17px;color:#333">&lt;</div></div>
<div class="a" style="left:48px;top:587px;width:29px;height:29px;background:#f5f6f8;border:1px solid #d6d6d6;border-radius:2px"><div class="a" style="left:0;top:6px;width:27px;text-align:center;font-size:17px;line-height:17px;color:#333">&gt;</div></div>
<div class="a" style="left:90px;top:595px;font-size:12px;line-height:12px;color:#c8c8c8">9553A25AE44CFDDC</div>
<div class="a" style="left:610px;top:587px;width:38px;height:30px;background:#52a852;border-radius:3px"><div class="a" style="left:0;top:8px;width:37px;text-align:center;font-size:13px;line-height:13px;color:#fff">Ok</div></div>
<div class="a" style="left:654px;top:587px;width:53px;height:30px;background:#f4f5f9;border:1px solid #d8d8dc;border-radius:3px"><div class="a" style="left:0;top:8px;width:51px;text-align:center;font-size:12px;line-height:12px;color:#333">Zrušiť</div></div>
</div>
<div class="a" style="left:944px;top:395px;width:186px;height:40px;border:4px solid #ff0000"></div>
<svg class="a" style="left:13px;top:51px" width="24" height="23" viewBox="0 0 24 23"><path d="M11.8 1 L14.8 8.2 L22.7 8.6 L16.6 13.6 L18.9 21.8 L11.8 17.3 L4.9 21.8 L7 13.6 L1 8.6 L8.8 8.2Z" fill="#e8bc28"/></svg>
<svg class="a" style="left:13px;top:93px" width="24" height="24" viewBox="0 0 24 24"><path d="M3.5 20.5 L13 11" stroke="#e05048" stroke-width="3.6" stroke-linecap="round"/><path d="M15.6 1 L16.9 4.8 L20.4 2.9 L19.6 6.7 L23.3 7.8 L19.9 9.9 L22.2 13 L18.3 12.6 L17.6 16.4 L15.4 13.3 L12.5 15.8 L12.6 11.8 L8.8 11.2 L12 8.9 L10.2 5.4 L14 6.1Z" fill="#e05048"/><path d="M14 15.5 l0.8 1.6 1.6 0.8 -1.6 0.8 -0.8 1.6 -0.8 -1.6 -1.6 -0.8 1.6 -0.8z" fill="#e05048"/><path d="M19 17 l1 2 2 1 -2 1 -1 2 -1 -2 -2 -1 2 -1z" fill="#e05048"/></svg>
<svg class="a" style="left:14px;top:139px" width="22" height="16" viewBox="0 0 22 16"><rect x="0" y="0" width="22" height="16" fill="#e9a02e"/><path d="M0.5 1.2 L11 9.5 L21.5 1.2" fill="none" stroke="#fff" stroke-width="0.9"/><path d="M0.5 15 L8 8.3 M21.5 15 L14 8.3" stroke="#fff" stroke-width="0.8"/></svg>
<svg class="a" style="left:14px;top:178px" width="22" height="22" viewBox="0 0 22 22"><path d="M11 0.6 L21.8 8.8 L19.8 8.8 L19.8 21 L2.2 21 L2.2 8.8 L0.2 8.8Z" fill="#2ea58a"/><rect x="15" y="2" width="3" height="5" fill="#2ea58a"/><rect x="8" y="12" width="6" height="9" fill="#fff"/><rect x="9" y="13" width="4" height="8" fill="#2ea58a"/></svg>
<svg class="a" style="left:16px;top:221px" width="19" height="19" viewBox="0 0 19 19"><rect x="0" y="0" width="19" height="19" fill="#cd4434"/><rect x="5.6" y="5.6" width="3.4" height="3.4" fill="#fff"/><rect x="5.6" y="10.1" width="3.4" height="3.4" fill="#fff"/><rect x="5.6" y="14.6" width="3.4" height="3.4" fill="#fff"/><rect x="10.1" y="5.6" width="3.4" height="3.4" fill="#fff"/><rect x="10.1" y="10.1" width="3.4" height="3.4" fill="#fff"/><rect x="10.1" y="14.6" width="3.4" height="3.4" fill="#fff"/><rect x="14.6" y="5.6" width="3.4" height="3.4" fill="#fff"/><rect x="14.6" y="10.1" width="3.4" height="3.4" fill="#fff"/><rect x="14.6" y="14.6" width="3.4" height="3.4" fill="#fff"/><rect x="4.0" y="0" width="0.7" height="4.6" fill="#e89080"/><rect x="0" y="4.0" width="4.6" height="0.7" fill="#e89080"/><rect x="8.6" y="0" width="0.7" height="4.6" fill="#e89080"/><rect x="0" y="8.6" width="4.6" height="0.7" fill="#e89080"/><rect x="13.2" y="0" width="0.7" height="4.6" fill="#e89080"/><rect x="0" y="13.2" width="4.6" height="0.7" fill="#e89080"/><rect x="17.8" y="0" width="0.7" height="4.6" fill="#e89080"/><rect x="0" y="17.8" width="4.6" height="0.7" fill="#e89080"/></svg>
<svg class="a" style="left:16px;top:263px" width="18" height="20" viewBox="0 0 18 20"><rect x="1.5" y="0.5" width="15.5" height="19" rx="1.5" fill="#3a90d8"/><rect x="6" y="5" width="8" height="5" fill="#fff"/><rect x="7" y="6.3" width="6" height="0.9" fill="#3a90d8"/><rect x="7" y="8" width="6" height="0.9" fill="#3a90d8"/><rect x="0" y="3.0" width="3" height="1" fill="#eceef1"/><rect x="0" y="6.2" width="3" height="1" fill="#eceef1"/><rect x="0" y="9.4" width="3" height="1" fill="#eceef1"/><rect x="0" y="12.6" width="3" height="1" fill="#eceef1"/><rect x="0" y="15.8" width="3" height="1" fill="#eceef1"/></svg>
<svg class="a" style="left:14px;top:303px" width="22" height="24" viewBox="0 0 22 24"><path d="M4.5 16.5 A9.5 9.5 0 1 1 18 19" fill="none" stroke="#e05040" stroke-width="1"/><path d="M2.5 15 L5 18.5 L7.5 15.5" fill="none" stroke="#e05040" stroke-width="1"/><ellipse cx="11" cy="9.5" rx="4.2" ry="5.5" fill="#e05040"/><path d="M2.5 23 Q3.5 17 11 16.5 Q18.5 17 19.5 23Z" fill="#e05040"/></svg>
<svg class="a" style="left:13px;top:346px" width="24" height="22" viewBox="0 0 24 22"><rect x="2" y="3" width="20" height="18" fill="#3b4b5b"/><rect x="2" y="7" width="20" height="1" fill="#eceef1"/><rect x="14" y="0" width="2" height="5" fill="#3b4b5b" stroke="#eceef1" stroke-width="0.6"/><rect x="7.0" y="10.0" width="2" height="2" fill="#fff"/><rect x="7.0" y="13.3" width="2" height="2" fill="#fff"/><rect x="7.0" y="16.6" width="2" height="2" fill="#fff"/><rect x="10.4" y="10.0" width="2" height="2" fill="#fff"/><rect x="10.4" y="13.3" width="2" height="2" fill="#fff"/><rect x="10.4" y="16.6" width="2" height="2" fill="#fff"/><rect x="13.8" y="10.0" width="2" height="2" fill="#fff"/><rect x="13.8" y="13.3" width="2" height="2" fill="#fff"/><rect x="13.8" y="16.6" width="2" height="2" fill="#fff"/><rect x="17.2" y="10.0" width="2" height="2" fill="#fff"/><rect x="17.2" y="13.3" width="2" height="2" fill="#fff"/><rect x="17.2" y="16.6" width="2" height="2" fill="#fff"/><circle cx="5" cy="5" r="4.6" fill="#fff" stroke="#eceef1" stroke-width="0.8"/><circle cx="5" cy="5" r="3.6" fill="none" stroke="#3b4b5b" stroke-width="1"/><path d="M5 2.8 V5.2 H6.6" fill="none" stroke="#3b4b5b" stroke-width="0.8"/></svg>
<div class="a" style="left:1px;top:383px;width:48px;height:1px;background:#d2d4d8"></div>
<svg class="a" style="left:14px;top:398px" width="22" height="22" viewBox="0 0 22 22"><circle cx="11" cy="11" r="9.8" fill="#3cc070"/><circle cx="20.60" cy="11.00" r="1.0" fill="#3cc070"/><circle cx="19.31" cy="15.80" r="1.0" fill="#3cc070"/><circle cx="15.80" cy="19.31" r="1.0" fill="#3cc070"/><circle cx="11.00" cy="20.60" r="1.0" fill="#3cc070"/><circle cx="6.20" cy="19.31" r="1.0" fill="#3cc070"/><circle cx="2.69" cy="15.80" r="1.0" fill="#3cc070"/><circle cx="1.40" cy="11.00" r="1.0" fill="#3cc070"/><circle cx="2.69" cy="6.20" r="1.0" fill="#3cc070"/><circle cx="6.20" cy="2.69" r="1.0" fill="#3cc070"/><circle cx="11.00" cy="1.40" r="1.0" fill="#3cc070"/><circle cx="15.80" cy="2.69" r="1.0" fill="#3cc070"/><circle cx="19.31" cy="6.20" r="1.0" fill="#3cc070"/><path d="M6.5 11 L9.5 14 L15.5 7.5" fill="none" stroke="#fff" stroke-width="1"/></svg>
<svg class="a" style="left:14px;top:440px" width="22" height="22" viewBox="0 0 22 22"><circle cx="11" cy="11" r="10" fill="#e25546"/><path d="M6 15.5 L10 6.5 L13 15 M7.5 12 L12.5 11" fill="none" stroke="#fff" stroke-width="1"/><path d="M14 8 H17 M15.5 6.5 V9.5" stroke="#fff" stroke-width="0.9"/></svg>
<svg class="a" style="left:14px;top:483px" width="22" height="20" viewBox="0 0 22 20"><rect x="1" y="3" width="20" height="16" rx="1.5" fill="#3a80c0"/><rect x="8" y="0.8" width="6" height="3" rx="1" fill="none" stroke="#3a80c0" stroke-width="1.2"/><rect x="1" y="10" width="20" height="1.2" fill="#9cc0e0"/><circle cx="11" cy="10.6" r="1.5" fill="#3a80c0" stroke="#9cc0e0" stroke-width="0.9"/></svg>
<svg class="a" style="left:14px;top:523px" width="22" height="24" viewBox="0 0 22 24"><path d="M11 1 Q6 4 1.5 3.5 Q1 16 11 23 Q21 16 20.5 3.5 Q16 4 11 1Z" fill="#33a85e"/><path d="M6.5 12 L9.5 15 L15 9" fill="none" stroke="#fff" stroke-width="1"/></svg>
<svg class="a" style="left:16px;top:568px" width="18" height="19" viewBox="0 0 18 19"><rect x="0.5" y="3" width="4.5" height="15.5" fill="#1fb4d0"/><rect x="6.5" y="8" width="4.5" height="10.5" fill="#1fb4d0"/><rect x="12.5" y="0.5" width="4.5" height="18" fill="#1fb4d0"/><rect x="0" y="18" width="18" height="1" fill="#7ed4e4"/></svg>
<div class="a" style="left:1px;top:603px;width:48px;height:1px;background:#d2d4d8"></div>
<svg class="a" style="left:14px;top:619px" width="22" height="21" viewBox="0 0 22 21"><path d="M1 3.8 L11 0.5 L21 3.8" fill="none" stroke="#3a80c0" stroke-width="0.9"/><path d="M1.5 5 Q6 4 10.3 5.5 V17 Q6 15.5 1.5 16.5Z M11.7 5.5 Q16 4 20.5 5 V16.5 Q16 15.5 11.7 17Z" fill="#3a80c0"/><path d="M0.5 17.5 Q6 17 11 19 Q16 17 21.5 17.5" fill="none" stroke="#3a80c0" stroke-width="1.2"/></svg>
<svg class="a" style="left:37px;top:625px" width="5" height="9" viewBox="0 0 5 9"><path d="M0.5 0.5 L4 4 L0.5 7.5" fill="none" stroke="#c4c8cc" stroke-width="1"/></svg>
<svg class="a" style="left:14px;top:660px" width="22" height="22" viewBox="0 0 22 22"><rect x="1" y="1" width="3" height="20" rx="1.2" fill="#30a8b0"/><path d="M5.5 1 H15 L21 7 V19 Q21 21 19 21 H7.5 Q5.5 21 5.5 19Z" fill="#30a8b0"/><path d="M15 1 V7 H21" fill="#fff" opacity="0.9"/><rect x="9" y="11" width="8" height="1.5" fill="#fff"/><rect x="9" y="14.5" width="5" height="1.5" fill="#fff"/></svg>
<svg class="a" style="left:37px;top:666px" width="5" height="9" viewBox="0 0 5 9"><path d="M0.5 0.5 L4 4 L0.5 7.5" fill="none" stroke="#c4c8cc" stroke-width="1"/></svg>
<svg class="a" style="left:14px;top:702px" width="22" height="22" viewBox="0 0 22 22"><ellipse cx="8.5" cy="8" rx="7.5" ry="6.5" fill="#c84038"/><path d="M2.5 12.5 L1 16 L6 13.5Z" fill="#c84038"/><ellipse cx="15.5" cy="15" rx="5.5" ry="4.5" fill="#c84038" stroke="#eceef1" stroke-width="0.8"/><path d="M19 18 L21.5 21 L16 19Z" fill="#c84038"/><rect x="4.5" y="5" width="8" height="1" fill="#f0a8a0"/><rect x="4.5" y="7.3" width="8" height="1" fill="#f0a8a0"/><rect x="4.5" y="9.6" width="5" height="1" fill="#f0a8a0"/></svg>
<svg class="a" style="left:37px;top:708px" width="5" height="9" viewBox="0 0 5 9"><path d="M0.5 0.5 L4 4 L0.5 7.5" fill="none" stroke="#c4c8cc" stroke-width="1"/></svg>
<div class="a" style="left:1px;top:735px;width:48px;height:40px;background:#667f8c"></div>
<svg class="a" style="left:13px;top:743px" width="24" height="24" viewBox="0 0 24 24"><path d="M1 22 L4.5 12 L14.5 2 L20 2 L10 12 L8 13 L6 18 L9 19 L11 17 L21 7 L21.5 11.5 L12 20.5Z" fill="#fff"/><path d="M19 4.5 L9.5 14" stroke="#fff" stroke-width="2"/></svg>
<svg class="a" style="left:14px;top:784px" width="21" height="21" viewBox="0 0 21 21"><circle cx="10.5" cy="10.5" r="7.5" fill="#95a5a6"/><rect x="16.80" y="8.50" width="4" height="4" rx="0.8" transform="rotate(0 18.80 10.50)" fill="#95a5a6"/><rect x="14.37" y="14.37" width="4" height="4" rx="0.8" transform="rotate(45 16.37 16.37)" fill="#95a5a6"/><rect x="8.50" y="16.80" width="4" height="4" rx="0.8" transform="rotate(90 10.50 18.80)" fill="#95a5a6"/><rect x="2.63" y="14.37" width="4" height="4" rx="0.8" transform="rotate(135 4.63 16.37)" fill="#95a5a6"/><rect x="0.20" y="8.50" width="4" height="4" rx="0.8" transform="rotate(180 2.20 10.50)" fill="#95a5a6"/><rect x="2.63" y="2.63" width="4" height="4" rx="0.8" transform="rotate(225 4.63 4.63)" fill="#95a5a6"/><rect x="8.50" y="0.20" width="4" height="4" rx="0.8" transform="rotate(270 10.50 2.20)" fill="#95a5a6"/><rect x="14.37" y="2.63" width="4" height="4" rx="0.8" transform="rotate(315 16.37 4.63)" fill="#95a5a6"/><circle cx="10.5" cy="10.5" r="3" fill="#eceef1"/></svg>
<svg class="a" style="left:20px;top:821px" width="11" height="15" viewBox="0 0 11 15"><path d="M2 1 L8.5 7.5 L2 14" fill="none" stroke="#4f6f96" stroke-width="1.4"/></svg>
</body></html>
